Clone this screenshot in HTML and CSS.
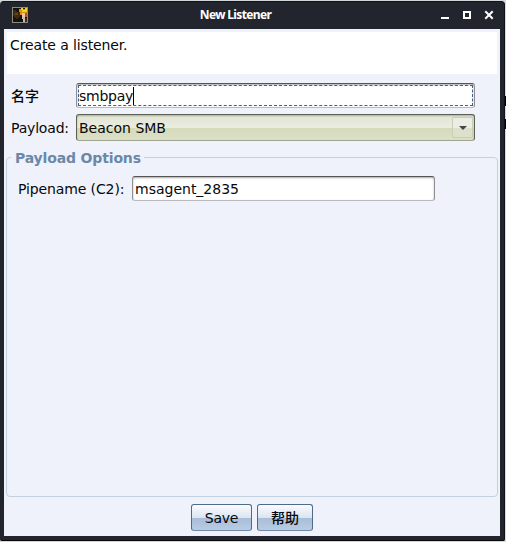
FILE: index.html
```html
<!DOCTYPE html>
<html lang="zh-CN">
<head>
<meta charset="utf-8">
<title>New Listener</title>
<link rel="stylesheet" href="styles.css">
</head>
<body>
<div class="desktop">
<main class="window">
  <header class="titlebar">
    <svg class="app-icon" width="16" height="16" viewBox="0 0 16 16" shape-rendering="crispEdges">
      <rect width="16" height="16" fill="#17120e"/>
      <path d="M1 3h2l2 2 3-1v5l-3 3-3-2-1-2z" fill="#3d2b12"/>
      <path d="M3 6h3v2H3z" fill="#6a4712"/>
      <path d="M7 2h8v5h-2V6h-2v2H8V5H7z" fill="#dc8b16"/>
      <path d="M9 0h2v3h2V1h2v4h-5z" fill="#e9d51b"/>
      <path d="M10 6h3v5h-2l-1-2z" fill="#edc4a0"/>
      <path d="M10 10h3v5h-2v-3h-1z" fill="#b9c0c8"/>
      <path d="M13 6h2v4h-2z" fill="#b9521b"/>
      <path d="M13 11h2v4h-2z" fill="#40291c"/>
      <path d="M.5 .5h15v15H.5z" fill="none" stroke="#8e8b82"/>
    </svg>
    <h1>New Listener</h1>
    <svg class="controls" width="54" height="12" viewBox="0 0 54 12">
      <path d="M1 9h8v2H1z" fill="#fff"/>
      <path d="M24 4h6v6h-6z" fill="none" stroke="#fff" stroke-width="2"/>
      <path d="M46 4l6 6M52 4l-6 6" fill="none" stroke="#fff" stroke-width="2" stroke-linecap="square"/>
    </svg>
  </header>
  <section class="body">
    <p class="description">Create a listener.</p>
    <div class="form">
      <label class="cjk">名字</label>
      <div class="field focused"><span>smbpay</span><i class="caret"></i></div>
      <label>Payload:</label>
      <div class="field select"><span>Beacon SMB</span>
        <div class="arrow"><svg width="8" height="4" viewBox="0 0 8 4"><path d="M0 0h8L4 4z" fill="#454545"/></svg></div>
      </div>
    </div>
    <fieldset class="options">
      <legend>Payload Options</legend>
      <div class="option"><label>Pipename (C2):</label><div class="field pipe"><span>msagent_2835</span></div></div>
    </fieldset>
    <footer class="actions">
      <button class="save">Save</button>
      <button class="help cjk">帮助</button>
    </footer>
  </section>
</main>
<aside class="behind"><i></i><i></i></aside>
</div>
</body>
</html>
```
FILE: styles.css
```css
* { box-sizing: border-box; }
body { margin: 0; width: 506px; height: 542px; overflow: hidden; font: 14px "DejaVu Sans", "Noto Sans CJK SC", sans-serif; letter-spacing: -.12px; color: #080808; }
.desktop { display: grid; grid-template-columns: 505px 1px; height: 542px; padding-top: 1px; background: #d2d7d9; }
.window { height: 540px; padding: 0 5px 4px 4px; background: #23252e; border-radius: 4px 4px 2px 2px; border-top: 1px solid #12141a; border-bottom: 1px solid #08090d; box-shadow: inset -1px 0 #11131b; }
.titlebar { display: flex; align-items: center; height: 27px; padding: 0 6px 1px 8px; }
.titlebar h1 { flex: 1; margin: 0; padding-left: 3px; text-align: center; font: bold 12px/16px "Noto Sans", sans-serif; letter-spacing: -.65px; color: #fff; }
.controls { display: block; margin-top: -2px; }
.body { display: flex; flex-direction: column; height: 507px; padding: 3px 3px 0; background: #eff2fb; }
.description { flex: none; height: 42px; margin: 0; padding: 4px 3px; background: #fff; line-height: 18px; }
.form { display: grid; grid-template-columns: 65px 399px; grid-template-rows: 25px 27px; row-gap: 6px; margin-top: 9px; padding-left: 4px; align-items: center; letter-spacing: -.18px; }
.field { position: relative; display: flex; align-items: center; height: 25px; padding: 0 2px; background: #fff; border: 1px solid #8d8f92; border-top: 1px solid #555; border-bottom-color: #b8babf; border-radius: 3px; box-shadow: inset 0 1px 2px #aaa; white-space: nowrap; letter-spacing: 0; }
.focused { letter-spacing: -.25px; }
.focused::after { content: ""; position: absolute; inset: 1px; border: 1px dashed #456080; }
.caret { width: 1px; height: 18px; background: #000; }
.select { height: 27px; border-color: #5b624f; border-bottom-color: #a1a691; background: linear-gradient(#e2e5d4 0, #eaecdf 50%, #d5dabb 51%, #dce0c7 100%); padding-right: 1px; }
.arrow { display: grid; place-items: center; width: 21px; height: 21px; margin-left: auto; border: 1px solid #c9cebb; border-radius: 2px; background: linear-gradient(#eceee3 50%, #dde1cb 51%); }
.options { display: block; flex: none; height: 350px; min-width: 0; margin: 6px -1px 0; padding: 9px 10px 0 11px; border: 1px solid #c3d0e0; border-radius: 4px; }
.options legend { padding: 3px 3px 0 4px; margin-left: -7px; font-size: 14px; line-height: 17px; font-weight: bold; letter-spacing: -.15px; color: #6b88a7; }
.option { display: flex; align-items: center; }
.option label { width: 114px; white-space: nowrap; }
.pipe { width: 303px; }
.actions { display: flex; justify-content: center; gap: 5px; padding-top: 7px; }
button { height: 27px; padding: 0; border: 1px solid #4e6b88; border-bottom-color: #718aa7; border-radius: 3px; background: linear-gradient(#fafbfd 0, #dbe5f1 50%, #a8bdd8 52%, #b9cce4 100%); font: inherit; letter-spacing: -.2px; color: #080808; }
.save { width: 61px; }
.help { width: 56px; }
.cjk { padding-bottom: 2px; font-family: "Noto Sans CJK SC", sans-serif; font-weight: 500; letter-spacing: 0; }
.behind { padding-top: 95px; background: #d5dae4; }
.behind i { display: block; height: 10px; margin-bottom: 13px; background: #000; }
```
